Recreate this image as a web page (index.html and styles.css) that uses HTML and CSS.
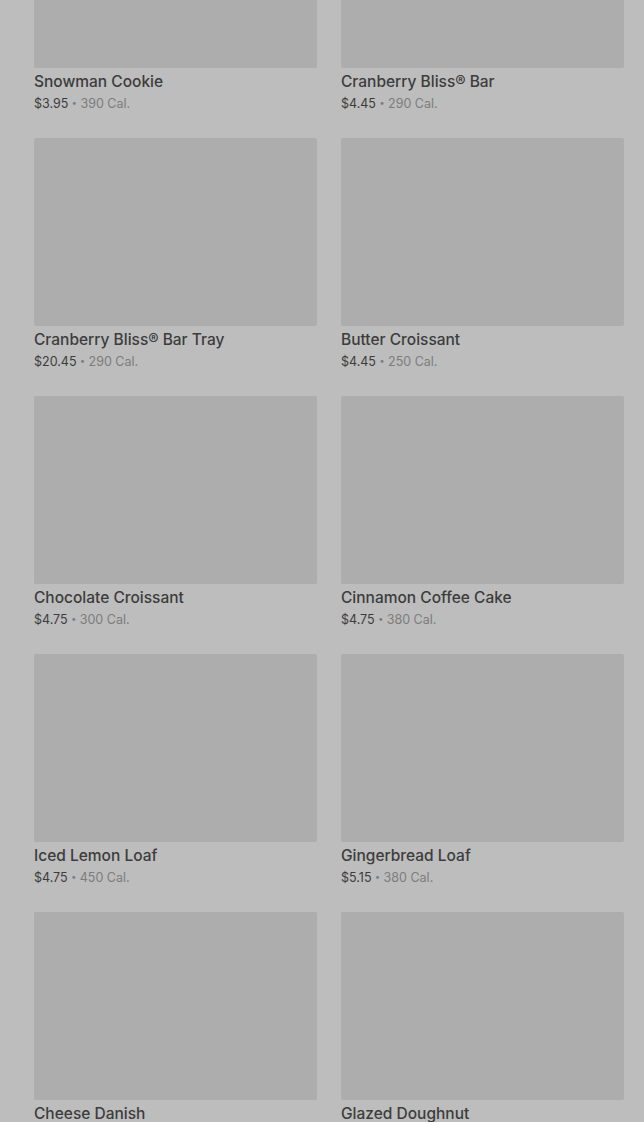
FILE: index.html
```html
<!DOCTYPE html>
<html lang="en">
<head>
<meta charset="utf-8">
<title>Bakery</title>
<link rel="stylesheet" href="styles.css">
</head>
<body>
<main class="grid">
  <div class="card"><div class="thumb"></div><div class="name">Snowman Cookie</div><div class="meta"><span class="price">$3.95</span> <span class="dot">•</span> 390 Cal.</div></div>
  <div class="card"><div class="thumb"></div><div class="name">Cranberry Bliss® Bar</div><div class="meta"><span class="price">$4.45</span> <span class="dot">•</span> 290 Cal.</div></div>
  <div class="card"><div class="thumb"></div><div class="name">Cranberry Bliss® Bar Tray</div><div class="meta"><span class="price">$20.45</span> <span class="dot">•</span> 290 Cal.</div></div>
  <div class="card"><div class="thumb"></div><div class="name">Butter Croissant</div><div class="meta"><span class="price">$4.45</span> <span class="dot">•</span> 250 Cal.</div></div>
  <div class="card"><div class="thumb"></div><div class="name">Chocolate Croissant</div><div class="meta"><span class="price">$4.75</span> <span class="dot">•</span> 300 Cal.</div></div>
  <div class="card"><div class="thumb"></div><div class="name">Cinnamon Coffee Cake</div><div class="meta"><span class="price">$4.75</span> <span class="dot">•</span> 380 Cal.</div></div>
  <div class="card"><div class="thumb"></div><div class="name">Iced Lemon Loaf</div><div class="meta"><span class="price">$4.75</span> <span class="dot">•</span> 450 Cal.</div></div>
  <div class="card"><div class="thumb"></div><div class="name">Gingerbread Loaf</div><div class="meta"><span class="price">$5.15</span> <span class="dot">•</span> 380 Cal.</div></div>
  <div class="card"><div class="thumb"></div><div class="name">Cheese Danish</div><div class="meta"><span class="price">$3.75</span> <span class="dot">•</span> 400 Cal.</div></div>
  <div class="card"><div class="thumb"></div><div class="name">Glazed Doughnut</div><div class="meta"><span class="price">$3.25</span> <span class="dot">•</span> 480 Cal.</div></div>
</main>
</body>
</html>
```
FILE: styles.css
```css
html, body {
  margin: 0;
  padding: 0;
  background: #bdbdbd;
  overflow: hidden;
}
body {
  font-family: Inter, Roboto, "Liberation Sans", sans-serif;
}
.grid {
  display: grid;
  grid-template-columns: 283px 283px;
  column-gap: 24px;
  row-gap: 24px;
  padding-left: 34px;
  margin-top: -120px;
}
.card {
  height: 234px;
}
.thumb {
  height: 188px;
  background: #adadad;
  border-radius: 2px;
}
.name {
  margin-top: 3px;
  font-size: 15.5px;
  line-height: 22px;
  font-weight: 500;
  color: #3c3c3c;
}
.meta {
  margin-top: 1px;
  font-size: 12.5px;
  line-height: 20px;
  color: #7c7c7c;
}
.price {
  color: #3c3c3c;
}
.dot {
  font-size: 9px;
  line-height: 0;
  vertical-align: 2px;
}
```
